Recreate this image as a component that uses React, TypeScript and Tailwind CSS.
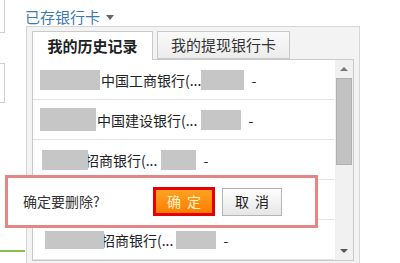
const cjk = "font-['Noto_Sans_CJK_SC','Noto_Sans',sans-serif]";

type Row = {
  box1: string;
  bank: string;
  box2: string;
  overlap?: boolean;
};

const rows: (Row | null)[] = [
  { box1: "ml-[7px] w-[60px] h-[20px]", bank: "中国工商银行(...", box2: "ml-[0px] w-[43px] h-[20px]" },
  { box1: "ml-[7px] w-[56px] h-[23px]", bank: "中国建设银行(...", box2: "ml-[4px] w-[40px] h-[20px]" },
  { box1: "ml-[9px] w-[46px] h-[20px]", bank: "招商银行(...", box2: "ml-[4px] w-[35px] h-[20px]", overlap: true },
  null,
  { box1: "ml-[12px] w-[59px] h-[18px]", bank: "招商银行(...", box2: "ml-[3px] w-[40px] h-[18px]", overlap: true },
];

function CardRow({ row }: { row: Row | null }) {
  return (
    <div className="h-[40px] border-b border-[#e2e2e2] flex items-center text-[14px] text-[#222]">
      {row && (
        <>
          <div className={`relative z-10 bg-[#c6c6c6] ${row.box1}`} />
          <span className={`whitespace-nowrap leading-none ${row.overlap ? "-ml-[3px]" : "ml-[1px]"}`}>{row.bank}</span>
          <div className={`bg-[#c6c6c6] ${row.box2}`} />
          <span className="ml-[7px] leading-none">-</span>
        </>
      )}
    </div>
  );
}

export default function App() {
  return (
    <div className={`relative w-[400px] h-[263px] overflow-hidden bg-white flex ${cjk}`}>
      {/* left column: cut-off inputs */}
      <div className="w-[26px] shrink-0 flex flex-col">
        <div className="w-[5px] h-[33px] border-r border-b border-[#cfcfcf]" />
        <div className="mt-[30px] w-[5px] h-[40px] border-r border-t border-b border-[#cfcfcf]" />
        <div className="mt-[147px] h-[2px] w-[25px] bg-[#8cc152]" />
      </div>

      <div className="flex flex-col">
        <div className="h-[27px] pt-[8px] -ml-[1px] flex items-start">
          <span className="text-[15px] leading-[18px] text-[#3b7bb4]">已存银行卡</span>
          <span className="ml-[6px] mt-[7px] w-0 h-0 border-l-[4px] border-r-[4px] border-t-[5px] border-l-transparent border-r-transparent border-t-[#666]" />
        </div>

        <div className="w-[334px] h-[240px] border border-[#d6d6d6] bg-[#f3f3f3] pt-[4px] px-[5px] pb-[4px] flex flex-col">
          <div className="flex gap-[4px] h-[28px] relative z-10">
            <div className="w-[121px] h-[29px] bg-white border border-b-0 border-[#c9c9c9] flex items-center justify-center text-[15px] font-bold text-[#222]">
              我的历史记录
            </div>
            <div className="w-[133px] h-[28px] bg-gradient-to-b from-[#fafafa] to-[#ececec] border border-[#c9c9c9] flex items-center justify-center text-[15px] text-[#333]">
              我的提现银行卡
            </div>
          </div>

          <div className="flex-1 border border-[#c9c9c9] bg-white flex overflow-hidden">
            <div className="w-[301px] flex flex-col">
              {rows.map((r, i) => (
                <CardRow key={i} row={r} />
              ))}
            </div>
            <div className="ml-[1px] w-[18px] bg-[#f1f1f1] flex flex-col items-center">
              <div className="h-[18px] flex items-center justify-center">
                <span className="w-0 h-0 border-l-[4px] border-r-[4px] border-b-[4px] border-l-transparent border-r-transparent border-b-[#777]" />
              </div>
              <div className="w-[16px] h-[87px] bg-[#c2c2c2] border border-[#b0b0b0]" />
              <div className="flex-1" />
              <div className="h-[18px] flex items-center justify-center">
                <span className="w-0 h-0 border-l-[4px] border-r-[4px] border-t-[4px] border-l-transparent border-r-transparent border-t-[#555]" />
              </div>
            </div>
          </div>
        </div>
      </div>

      {/* confirm popup */}
      <div className="absolute left-[5px] top-[175px] w-[313px] h-[53px] border-[3px] border-[#e48686] bg-white flex items-center pl-[15px]">
        <span className="w-[130px] text-[14px] text-[#333]">确定要删除?</span>
        <button className="w-[62px] h-[29px] border-[3px] border-[#e60000] bg-gradient-to-b from-[#ffa21f] to-[#ff7c00] text-[14px] text-[#fff4c8] tracking-[6px] pl-[6px] flex items-center justify-center">
          确定
        </button>
        <button className="ml-[7px] w-[60px] h-[28px] border border-[#b5b5b5] bg-gradient-to-b from-white to-[#e6e6e6] text-[14px] text-[#222] tracking-[6px] pl-[6px] flex items-center justify-center">
          取消
        </button>
      </div>
    </div>
  );
}
